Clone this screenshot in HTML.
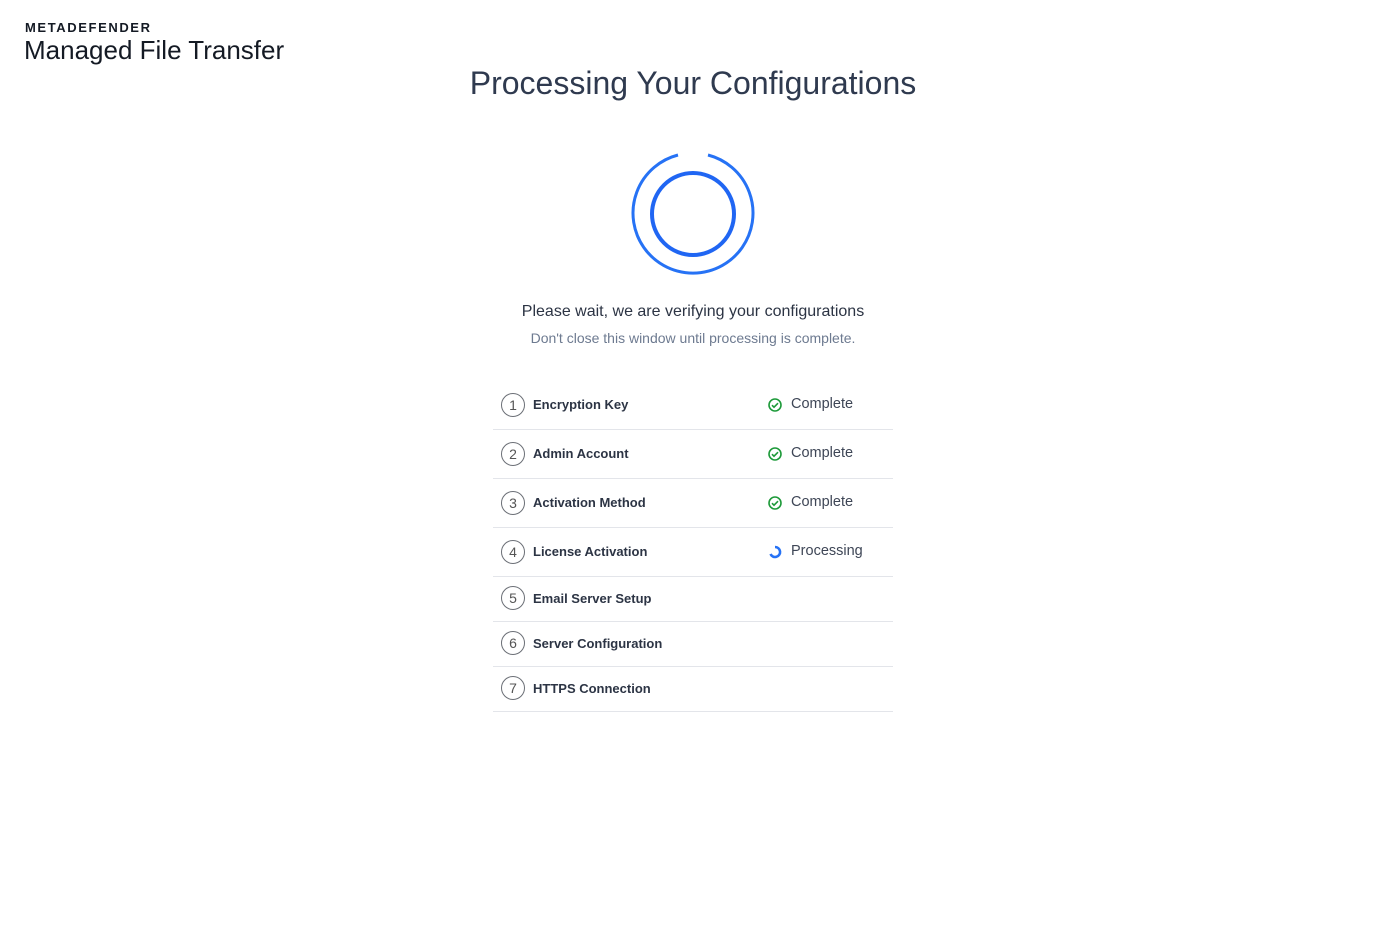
<!DOCTYPE html>
<html><head><style>
body{margin:0;background:#fff;font-family:"Liberation Sans",Arial,sans-serif;width:1381px;height:942px;position:relative;overflow:hidden}
.a{position:absolute}
.brand1{left:25px;top:20px;font-size:13px;font-weight:bold;letter-spacing:1.6px;color:#141a24}
.brand2{left:24px;top:35px;font-size:26px;color:#141a24}
h1{position:absolute;margin:0;left:0;width:1386px;text-align:center;top:65px;font-size:32px;font-weight:normal;color:#2f3a4f}
.row{position:absolute;left:493px;width:400px;border-bottom:1px solid #e3e5ea}
.num{position:absolute;left:8px;width:22px;height:22px;border:1px solid #6b6f76;border-radius:50%;font-size:14px;color:#555;text-align:center;line-height:22px}
.lbl{position:absolute;left:40px;font-size:13px;font-weight:bold;color:#2c3444}
.st{position:absolute;left:298px;font-size:14.5px;color:#3e4656}
.ic{position:absolute;left:274px}
</style></head><body>
<div class="a brand1">METADEFENDER</div>
<div class="a brand2">Managed File Transfer</div>
<h1>Processing Your Configurations</h1>
<svg class="a" style="left:623px;top:144px" width="140" height="140" viewBox="0 0 140 140">
<path d="M55 11 A60 60 0 1 0 85 11" fill="none" stroke="#2672f5" stroke-width="3"/>
<circle cx="70" cy="70" r="41" fill="none" stroke="#2066f3" stroke-width="4"/>
</svg>
<div class="a" style="left:0;width:1386px;text-align:center;top:303px;font-size:16px;color:#2c3444">Please wait, we are verifying your configurations</div>
<div class="a" style="left:0;width:1386px;text-align:center;top:330px;font-size:14px;color:#6d7a90">Don't close this window until processing is complete.</div>

<div class="row" style="top:380px;height:49px"><div class="num" style="top:13px">1</div><div class="lbl" style="top:17px">Encryption Key</div>
<svg class="ic" style="top:17px" width="16" height="16"><circle cx="8" cy="8" r="6" fill="none" stroke="#1e9a3a" stroke-width="1.6"/><path d="M5 8.2l2 2 4-4" fill="none" stroke="#1e9a3a" stroke-width="1.6"/></svg><div class="st" style="top:16px">Complete</div></div>
<div class="row" style="top:429px;height:49px"><div class="num" style="top:13px">2</div><div class="lbl" style="top:17px">Admin Account</div>
<svg class="ic" style="top:17px" width="16" height="16"><circle cx="8" cy="8" r="6" fill="none" stroke="#1e9a3a" stroke-width="1.6"/><path d="M5 8.2l2 2 4-4" fill="none" stroke="#1e9a3a" stroke-width="1.6"/></svg><div class="st" style="top:16px">Complete</div></div>
<div class="row" style="top:478px;height:49px"><div class="num" style="top:13px">3</div><div class="lbl" style="top:17px">Activation Method</div>
<svg class="ic" style="top:17px" width="16" height="16"><circle cx="8" cy="8" r="6" fill="none" stroke="#1e9a3a" stroke-width="1.6"/><path d="M5 8.2l2 2 4-4" fill="none" stroke="#1e9a3a" stroke-width="1.6"/></svg><div class="st" style="top:16px">Complete</div></div>
<div class="row" style="top:527px;height:49px"><div class="num" style="top:13px">4</div><div class="lbl" style="top:17px">License Activation</div>
<svg class="ic" style="top:17px" width="16" height="16"><path d="M8 3 A5 5 0 1 1 3.5 10" fill="none" stroke="#2672f5" stroke-width="2.6"/></svg><div class="st" style="top:16px">Processing</div></div>
<div class="row" style="top:576px;height:45px"><div class="num" style="top:10px">5</div><div class="lbl" style="top:15px">Email Server Setup</div></div>
<div class="row" style="top:621px;height:45px"><div class="num" style="top:10px">6</div><div class="lbl" style="top:15px">Server Configuration</div></div>
<div class="row" style="top:666px;height:45px"><div class="num" style="top:10px">7</div><div class="lbl" style="top:15px">HTTPS Connection</div></div>
</body></html>
